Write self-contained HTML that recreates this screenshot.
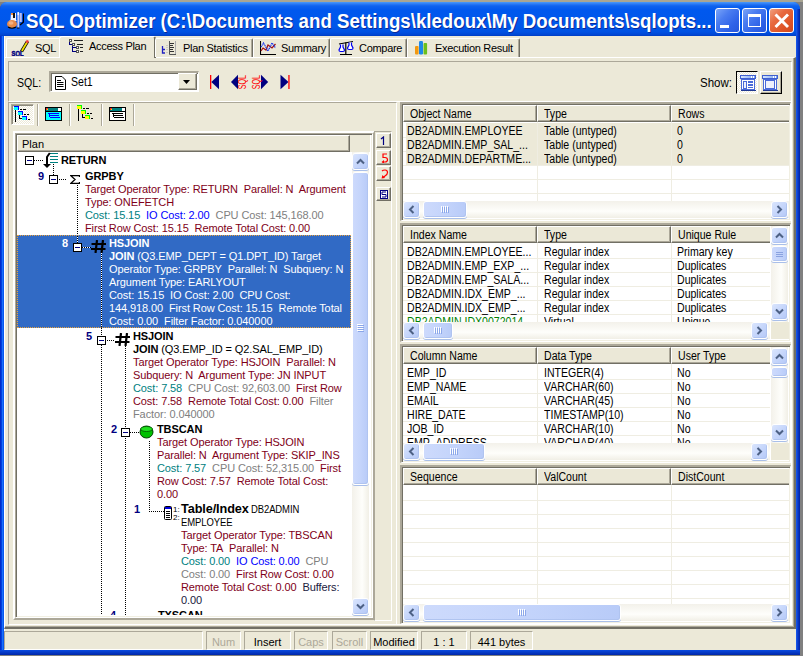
<!DOCTYPE html>
<html><head><meta charset="utf-8"><style>
*{box-sizing:border-box;margin:0;padding:0}
html,body{width:803px;height:656px;overflow:hidden;background:#808080;font-family:"Liberation Sans",sans-serif;font-size:11px;color:#000}
.a{position:absolute}
.t{white-space:nowrap;line-height:13px}
.ms{display:inline-block;font-size:12px;transform:scaleX(0.88);transform-origin:0 0}
.tr .t{letter-spacing:-0.1px}
.sbb{border:1px solid #fff;border-radius:3px;background:linear-gradient(135deg,#dae5fd,#c6d6fb 50%,#b4c8f7);box-shadow:inset -1px -1px 0 #b0c4f0, 0 1px 0 #a9bfe9}
.sbt{border:1px solid #fff;border-radius:3px;background:linear-gradient(90deg,#cddafc,#c4d4fb 50%,#b8cbf8);box-shadow:inset -1px -1px 0 #b0c4f0, 0 1px 0 #a9bfe9}
.trv{background:linear-gradient(90deg,#f3f1ea,#fefefb 60%,#f1efe6)}
.trh{background:linear-gradient(180deg,#f3f1ea,#fefefb 60%,#f1efe6)}
.hdr{background:#ebe8d7;border-top:1px solid #fff;border-left:1px solid #fff;border-right:1px solid #716f64;border-bottom:1px solid #716f64;box-shadow:inset -1px -1px 0 #aca899}
</style></head><body>
<div class="a" style="left:0;top:0;width:803px;height:2px;background:#a9a593"></div>
<div class="a" style="left:0;top:2px;width:800px;height:653px;background:linear-gradient(90deg,#0022c0 0px,#0040e0 1.5px,#1a70fa 2.5px,#0858f0 3.5px);border-radius:7px 7px 0 0"></div>
<div class="a" style="left:0;top:2px;width:800px;height:34px;border-radius:7px 7px 0 0;background:linear-gradient(180deg,#4a9af8 0px,#2a7af6 2px,#0e62ee 4px,#0058ee 8px,#0057ea 24px,#0051e2 30px,#0045d2 33px,#003cc0 34px)"></div>
<div class="a" style="left:796px;top:9px;width:4px;height:646px;background:linear-gradient(90deg,#1a5cf0,#0838c8 50%,#0022a0)"></div>
<div class="a" style="left:0;top:650px;width:800px;height:5px;background:linear-gradient(180deg,#0a4ae0,#0026a8)"></div>
<svg class="a" style="left:6px;top:12px" width="18" height="17">
<path d="M17.5 1.5 V10 L14 13" stroke="#000" stroke-width="1.3" fill="none"/>
<rect x="11.4" y="0.5" width="1.8" height="15.5" fill="#c8ccf4"/><rect x="13.6" y="1" width="2.2" height="9" fill="#b8bef0"/><rect x="11.6" y="0" width="1.2" height="3" fill="#fff"/>
<rect x="11" y="15.5" width="2.5" height="1" fill="#000"/>
<path d="M5 1 H10 V8 L11 9 H3 L4.5 8 Z" fill="#f4f4fc"/><rect x="5" y="1" width="2" height="2" fill="#f09040"/><rect x="7" y="1" width="2" height="5" fill="#111"/>
<ellipse cx="6" cy="12" rx="5" ry="4" fill="#e88a48"/><ellipse cx="5" cy="11" rx="2.5" ry="1.8" fill="#f4b080"/>
<path d="M2 15 Q6 17.5 10 15" stroke="#000" stroke-width="1.2" fill="none"/>
</svg>
<div class="a t" style="left:26px;top:10px;color:#fff;font-weight:bold;font-size:20px;line-height:22px;transform:scaleX(0.934);transform-origin:0 0;text-shadow:1px 1px 0 #0a2a9a">SQL Optimizer (C:\Documents and Settings\kledoux\My Documents\sqlopts...</div>
<div class="a" style="left:715px;top:8px;width:25px;height:25px;border:1px solid #fff;border-radius:3px;background:linear-gradient(135deg,#7aa4f8 0%,#4a7cf0 35%,#2f63e8 70%,#2557dc 100%)"><div class="a" style="left:4px;top:16px;width:9px;height:3px;background:#fff"></div></div>
<div class="a" style="left:742px;top:8px;width:25px;height:25px;border:1px solid #fff;border-radius:3px;background:linear-gradient(135deg,#7aa4f8 0%,#4a7cf0 35%,#2f63e8 70%,#2557dc 100%)"><div class="a" style="left:5px;top:5px;width:13px;height:13px;border:1px solid #fff;border-top:3px solid #fff"></div></div>
<div class="a" style="left:769px;top:8px;width:25px;height:25px;border:1px solid #fff;border-radius:3px;background:linear-gradient(135deg,#f0a080 0%,#e86a40 35%,#df5528 70%,#cf4820 100%)"><svg class="a" style="left:4px;top:4px" width="16" height="16"><path d="M1.5 1.5 L14 14 M14 1.5 L1.5 14" stroke="#fff" stroke-width="2.9"/></svg></div>
<div class="a" style="left:4px;top:36px;width:792px;height:614px;background:#ece9d8"></div>
<div class="a" style="left:4px;top:36px;width:1px;height:614px;background:#fff"></div>
<div class="a" style="left:4px;top:57px;width:792px;height:572px;border-top:1px solid #fff;border-left:1px solid #fff;border-right:2px solid #716f64;border-bottom:2px solid #716f64;box-shadow:inset -1px -1px 0 #aca899"></div>
<div class="a" style="left:6px;top:38px;width:54px;height:19px;border-top:1px solid #fff;border-left:1px solid #fff;border-radius:2px 2px 0 0"></div>
<div class="a" style="left:59px;top:36px;width:97px;height:22px;background:#ece9d8;border-top:1px solid #fff;border-left:1px solid #fff;border-right:2px solid #716f64;border-radius:3px 3px 0 0"></div>
<div class="a" style="left:155px;top:38px;width:98px;height:19px;border-top:1px solid #fff;border-left:1px solid #fff;border-right:1px solid #716f64;box-shadow:inset -1px 0 0 #aca899;border-radius:2px 2px 0 0"></div>
<div class="a" style="left:253px;top:38px;width:77px;height:19px;border-top:1px solid #fff;border-left:1px solid #fff;border-right:1px solid #716f64;box-shadow:inset -1px 0 0 #aca899;border-radius:2px 2px 0 0"></div>
<div class="a" style="left:330px;top:38px;width:77px;height:19px;border-top:1px solid #fff;border-left:1px solid #fff;border-right:1px solid #716f64;box-shadow:inset -1px 0 0 #aca899;border-radius:2px 2px 0 0"></div>
<div class="a" style="left:407px;top:38px;width:113px;height:19px;border-top:1px solid #fff;border-left:1px solid #fff;border-right:1px solid #716f64;box-shadow:inset -1px 0 0 #aca899;border-radius:2px 2px 0 0"></div>
<div class="a t" style="left:35px;top:42px;font-size:11px;letter-spacing:-0.3px">SQL</div>
<div class="a t" style="left:89px;top:40px;font-size:11px;letter-spacing:-0.3px">Access Plan</div>
<div class="a t" style="left:183px;top:42px;font-size:11px;letter-spacing:-0.3px">Plan Statistics</div>
<div class="a t" style="left:281px;top:42px;font-size:11px;letter-spacing:-0.3px">Summary</div>
<div class="a t" style="left:359px;top:42px;font-size:11px;letter-spacing:-0.3px">Compare</div>
<div class="a t" style="left:435px;top:42px;font-size:11px;letter-spacing:-0.3px">Execution Result</div>
<svg class="a" style="left:11px;top:39px" width="18" height="17" shape-rendering="crispEdges">
<path d="M10.5 12.5 L16.5 2.5" stroke="#000" stroke-width="3.4" shape-rendering="auto"/><path d="M10.8 12 L16.3 2.8" stroke="#f0e000" stroke-width="1.8" shape-rendering="auto"/>
<path d="M15.6 3.8 L17 1.5" stroke="#f04040" stroke-width="2.6" shape-rendering="auto"/>
<text x="0.5" y="16.5" font-size="7.5" font-weight="bold" font-family="Liberation Sans" fill="#000080" stroke="#000080" stroke-width="0.5" textLength="12" lengthAdjust="spacingAndGlyphs">SQL</text>
</svg>
<svg class="a" style="left:68px;top:38px" width="16" height="16" shape-rendering="crispEdges">
<rect x="1" y="1" width="3" height="3" fill="#555"/><rect x="2" y="2" width="1" height="1" fill="#fff"/>
<rect x="4" y="5" width="3" height="3" fill="#555"/><rect x="5" y="6" width="1" height="1" fill="#fff"/>
<rect x="8" y="8" width="3" height="3" fill="#555"/><rect x="9" y="9" width="1" height="1" fill="#fff"/>
<rect x="8" y="12" width="3" height="3" fill="#555"/><rect x="9" y="13" width="1" height="1" fill="#fff"/>
<rect x="1" y="4" width="1" height="3" fill="#000080"/><rect x="1" y="6" width="3" height="1" fill="#000080"/>
<rect x="4" y="8" width="1" height="6" fill="#000080"/><rect x="4" y="9" width="4" height="1" fill="#000080"/><rect x="4" y="13" width="4" height="1" fill="#000080"/>
<rect x="6" y="2" width="9" height="1" fill="#222"/><rect x="9" y="6" width="6" height="1" fill="#222"/><rect x="12" y="9" width="3" height="1" fill="#222"/><rect x="12" y="13" width="3" height="1" fill="#222"/>
</svg>
<svg class="a" style="left:161px;top:40px" width="16" height="15">
<path d="M1.5 6 V13 H4 M1.5 9.5 H4" stroke="#2020c0" stroke-width="1.3" fill="none"/>
<path d="M6 5 V11 M6 12 V14" stroke="#aaa" stroke-dasharray="1 1"/>
<path d="M8.5 1 V14.5 H15" stroke="#555" fill="none"/><path d="M9 3.5 H13 M9 5.5 H12 M9 7.5 H13 M9 9.5 H12 M9 11.5 H13" stroke="#333"/>
<path d="M14.5 1 V14" stroke="#aaa"/>
</svg>
<svg class="a" style="left:260px;top:41px" width="17" height="15">
<path d="M0.5 0 V13.5 H16" stroke="#000" stroke-width="1.1" fill="none"/>
<path d="M1 10 L3 7 L6 9 L8 4 L12 7 L15.5 3" stroke="#a01010" stroke-width="1.2" fill="none"/>
<path d="M1 6 L3.5 2 L8 10 L12 2 L15.5 7" stroke="#1030f0" stroke-width="1.2" fill="none" stroke-dasharray="1.2 0.6"/>
</svg>
<svg class="a" style="left:337px;top:40px" width="18" height="16">
<path d="M2 4 L16 1.5" stroke="#000" stroke-width="1.1"/><path d="M8.8 2.5 V14.5 M3 14.5 H15" stroke="#000" stroke-width="1.2"/>
<path d="M3.5 4.5 V7 L2 10 Q2 11.5 3.5 11.5 H6 Q7.5 11.5 7.5 10 L6 7 V4.5" stroke="#0000f0" stroke-width="1.2" fill="#fff"/>
<path d="M12 2.5 V5 L10.5 8 Q10.5 9.5 12 9.5 H14.5 Q16 9.5 16 8 L14.5 5 V2.5" stroke="#0000f0" stroke-width="1.2" fill="#fff"/>
</svg>
<svg class="a" style="left:414px;top:40px" width="14" height="15">
<rect x="1" y="6" width="3.6" height="8.5" rx="1" fill="#f29a10"/><rect x="5" y="1" width="4" height="13.5" rx="1.2" fill="#1e88e8"/><rect x="9.5" y="3" width="3.6" height="11.5" rx="1" fill="#6cc01c"/>
</svg>
<div class="a" style="left:8px;top:61px;width:784px;height:41px;border-top:1px solid #aca899;border-left:1px solid #aca899;border-bottom:1px solid #fff;border-right:1px solid #fff"></div>
<div class="a t" style="left:17px;top:76px;line-height:14px"><span class="ms">SQL:</span></div>
<div class="a" style="left:49px;top:71px;width:150px;height:21px;background:#fff;border-top:2px solid #aca899;border-left:2px solid #aca899;border-bottom:1px solid #fff;border-right:1px solid #fff;box-shadow:inset 1px 1px 0 #716f64"></div>
<div class="a t" style="left:71px;top:75px;line-height:14px"><span class="ms">Set1</span></div>
<div class="a" style="left:178px;top:73px;width:19px;height:17px;background:#ece9d8;border-top:1px solid #fff;border-left:1px solid #fff;border-right:1px solid #716f64;border-bottom:1px solid #716f64;box-shadow:inset -1px -1px 0 #aca899"></div>
<svg class="a" style="left:183px;top:80px" width="8" height="5"><path d="M0 0 H7 L3.5 4 Z" fill="#000"/></svg>
<svg class="a" style="left:55px;top:76px" width="11" height="14"><path d="M0.5 0.5 H7 L10.5 4 V13.5 H0.5 Z" fill="#fff" stroke="#000"/><path d="M2 4.5 H6 M2 6.5 H8.5 M2 8.5 H8.5 M2 10.5 H8.5" stroke="#000"/></svg>
<svg class="a" style="left:209px;top:74px" width="82" height="17">
<rect x="1" y="1" width="1.3" height="14" fill="#f00"/><path d="M2.3 8 L10 0.8 V15.2 Z" fill="#000080"/>
<path d="M22 8 L29 0.8 V15.2 Z" fill="#000080"/>
<text transform="translate(37.3,15.2) rotate(-90)" font-size="10.5" font-family="Liberation Sans" fill="#f00" textLength="14.2" lengthAdjust="spacingAndGlyphs">SQL</text>
<path d="M59.2 8 L52 0.8 V15.2 Z" fill="#000080"/>
<text transform="translate(51.3,15.2) rotate(-90)" font-size="10.5" font-family="Liberation Sans" fill="#f00" textLength="14.2" lengthAdjust="spacingAndGlyphs">SQL</text>
<path d="M79.5 8 L71.5 0.8 V15.2 Z" fill="#000080"/><rect x="79.3" y="1" width="1.3" height="14" fill="#f00"/>
</svg>
<div class="a t" style="left:700px;top:76px;line-height:14px"><span class="ms" style="transform:scaleX(0.96)">Show:</span></div>
<div class="a" style="left:736px;top:71px;width:22px;height:23px;background:repeating-conic-gradient(#fff 0 25%,#ece9d8 0 50%) 0 0/2px 2px;border-top:1px solid #000;border-left:1px solid #000;border-right:1px solid #fff;border-bottom:1px solid #fff"></div>
<div class="a" style="left:760px;top:71px;width:22px;height:23px;background:#ece9d8;border-top:1px solid #fff;border-left:1px solid #fff;border-right:1px solid #000;border-bottom:1px solid #000;box-shadow:inset -1px -1px 0 #aca899"></div>
<svg class="a" style="left:739px;top:74px" width="18" height="18" shape-rendering="crispEdges"><defs><linearGradient id="tg" x1="0" x2="1"><stop offset="0" stop-color="#d8e8ff"/><stop offset="1" stop-color="#7aa0ee"/></linearGradient></defs><rect x="1.5" y="1.5" width="15" height="3" fill="url(#tg)" stroke="#4060d0"/><rect x="12" y="2" width="1" height="2" fill="#fff"/><rect x="14" y="2" width="1" height="2" fill="#fff"/><rect x="2.5" y="5.5" width="13" height="10" fill="#fff" stroke="#4a6ad8"/><rect x="4.5" y="7.5" width="3" height="7" fill="#eef0fc" stroke="#4a6ad8"/><rect x="9" y="7" width="5" height="2" fill="#4a6ad8"/><rect x="9" y="10" width="5" height="2" fill="#4a6ad8"/><rect x="9" y="13" width="5" height="1" fill="#4a6ad8"/><rect x="2" y="16" width="15" height="1" fill="#203890"/></svg>
<svg class="a" style="left:762px;top:74px" width="18" height="18" shape-rendering="crispEdges"><defs><linearGradient id="tg2" x1="0" x2="1"><stop offset="0" stop-color="#d8e8ff"/><stop offset="1" stop-color="#7aa0ee"/></linearGradient></defs><rect x="0.5" y="1.5" width="15" height="3" fill="url(#tg2)" stroke="#4060d0"/><rect x="11" y="2" width="1" height="2" fill="#fff"/><rect x="13" y="2" width="1" height="2" fill="#fff"/><rect x="1.5" y="5.5" width="13" height="10" fill="#fff" stroke="#4a6ad8"/><rect x="3.5" y="6.5" width="9" height="8" fill="#eef0fc" stroke="#4a6ad8"/><rect x="1" y="16" width="15" height="1" fill="#203890"/></svg>
<div class="a" style="left:8px;top:102px;width:784px;height:523px;border-left:1px solid #aca899;border-bottom:1px solid #fff;border-right:1px solid #fff"></div>
<div class="a" style="left:9px;top:102px;width:388px;height:522px;border-top:1px solid #aca899;border-right:1px solid #fff"></div>
<div class="a" style="left:11px;top:104px;width:23px;height:21px;background:repeating-conic-gradient(#fff 0 25%,#ece9d8 0 50%) 0 0/2px 2px;border-top:1px solid #aca899;border-left:1px solid #aca899;border-bottom:1px solid #fff;border-right:1px solid #fff;box-shadow:inset 1px 1px 0 #8e8b7c"></div>
<div class="a" style="left:37px;top:104px;width:2px;height:22px;border-left:1px solid #aca899;border-right:1px solid #fff"></div>
<div class="a" style="left:69px;top:104px;width:2px;height:22px;border-left:1px solid #aca899;border-right:1px solid #fff"></div>
<div class="a" style="left:101px;top:104px;width:2px;height:22px;border-left:1px solid #aca899;border-right:1px solid #fff"></div>
<div class="a" style="left:133px;top:104px;width:2px;height:22px;border-left:1px solid #aca899;border-right:1px solid #fff"></div>
<svg class="a" style="left:13px;top:105px" width="18" height="18" shape-rendering="crispEdges">
<rect x="1" y="1" width="5" height="1" fill="#0000ff"/><rect x="1" y="2" width="4" height="3" fill="#00ffff"/><rect x="5" y="1" width="1" height="4" fill="#0000ff"/>
<rect x="5" y="6" width="5" height="1" fill="#0000ff"/><rect x="5" y="7" width="4" height="3" fill="#00ffff"/><rect x="9" y="6" width="1" height="4" fill="#0000ff"/>
<rect x="9" y="11" width="5" height="1" fill="#0000ff"/><rect x="9" y="12" width="4" height="3" fill="#00ffff"/><rect x="13" y="11" width="1" height="4" fill="#0000ff"/>
<rect x="2" y="5" width="1" height="12" fill="#000"/><rect x="6" y="10" width="1" height="4" fill="#000"/><rect x="6" y="13" width="3" height="1" fill="#000"/>
<rect x="7" y="4" width="2" height="1" fill="#000"/><rect x="10" y="4" width="3" height="1" fill="#000"/>
<rect x="11" y="9" width="2" height="1" fill="#000"/><rect x="14" y="9" width="2" height="1" fill="#000"/><rect x="15" y="14" width="2" height="1" fill="#000"/>
</svg>
<svg class="a" style="left:45px;top:107px" width="17" height="14" shape-rendering="crispEdges">
<rect x="0" y="0" width="17" height="14" fill="#000"/><rect x="1" y="1" width="15" height="3" fill="#008080"/><rect x="1" y="1" width="2" height="2" fill="#f03030"/><rect x="2" y="2" width="1" height="1" fill="#f0f000"/><rect x="13" y="1" width="3" height="3" fill="#fff"/>
<rect x="1" y="4" width="15" height="1" fill="#000"/><rect x="1" y="5" width="15" height="8" fill="#00ffff"/>
<rect x="3" y="6" width="11" height="1" fill="#0000ff"/><rect x="5" y="8" width="9" height="1" fill="#0000ff"/><rect x="5" y="10" width="10" height="1" fill="#0000ff"/><rect x="4" y="7" width="1" height="3" fill="#0000ff"/>
</svg>
<svg class="a" style="left:76px;top:104px" width="18" height="18" shape-rendering="crispEdges">
<rect x="1" y="1" width="5" height="1" fill="#00ff00"/><rect x="1" y="2" width="4" height="3" fill="#ffff00"/><rect x="5" y="1" width="1" height="4" fill="#00ff00"/>
<rect x="5" y="6" width="5" height="1" fill="#00ff00"/><rect x="5" y="7" width="4" height="3" fill="#ffff00"/><rect x="9" y="6" width="1" height="4" fill="#00ff00"/>
<rect x="9" y="11" width="5" height="1" fill="#00ff00"/><rect x="9" y="12" width="4" height="3" fill="#ffff00"/><rect x="13" y="11" width="1" height="4" fill="#00ff00"/>
<rect x="2" y="5" width="1" height="12" fill="#000"/><rect x="6" y="10" width="1" height="4" fill="#000"/><rect x="6" y="13" width="3" height="1" fill="#000"/>
<rect x="7" y="4" width="2" height="1" fill="#000"/><rect x="10" y="4" width="3" height="1" fill="#000"/>
<rect x="11" y="9" width="2" height="1" fill="#000"/><rect x="14" y="9" width="2" height="1" fill="#000"/><rect x="15" y="14" width="2" height="1" fill="#000"/>
</svg>
<svg class="a" style="left:109px;top:107px" width="17" height="14" shape-rendering="crispEdges">
<rect x="0" y="0" width="17" height="14" fill="#000"/><rect x="1" y="1" width="15" height="3" fill="#008080"/><rect x="1" y="1" width="2" height="2" fill="#f03030"/><rect x="2" y="2" width="1" height="1" fill="#f0f000"/><rect x="13" y="1" width="3" height="3" fill="#fff"/>
<rect x="1" y="4" width="15" height="1" fill="#000"/><rect x="1" y="5" width="15" height="8" fill="#fff"/>
<rect x="3" y="6" width="11" height="1" fill="#000"/><rect x="5" y="8" width="9" height="1" fill="#000"/><rect x="5" y="10" width="10" height="1" fill="#000"/><rect x="4" y="7" width="1" height="3" fill="#000"/>
</svg>
<div class="a" style="left:13px;top:131px;width:362px;height:489px;border-top:2px solid #fff;border-left:2px solid #fff;border-right:2px solid #aca899;border-bottom:2px solid #aca899"></div>
<div class="a" style="left:15px;top:133px;width:358px;height:485px;background:#fff;border-top:1px solid #aca899;border-left:1px solid #aca899;border-right:1px solid #fff;border-bottom:1px solid #fff;box-shadow:inset 1px 1px 0 #716f64, inset -1px -1px 0 #f1efe2"></div>
<div class="a hdr" style="left:17px;top:135px;width:333px;height:17px;"></div>
<div class="a" style="left:350px;top:135px;width:20px;height:17px;background:#ebe8d7"></div>
<div class="a t" style="left:22px;top:138px;font-size:11px">Plan</div>
<div class="a tr" style="left:17px;top:152px;width:335px;height:463px;overflow:hidden">
<div class="a" style="left:0px;top:83px;width:334px;height:93px;background:#316ac5;border:1px dotted #e9a23c"></div>
<div class="a" style="left:8px;top:4px;width:9px;height:9px;background:#fff;border:1px solid #000"><div class="a" style="left:1px;top:3px;width:5px;height:1px;background:#000080"></div></div>
<div class="a" style="left:17px;top:8px;width:9px;height:1px;background:repeating-linear-gradient(90deg,#000 0 1px,transparent 1px 2px)"></div>
<div class="a" style="left:36px;top:12px;width:1px;height:11px;background:repeating-linear-gradient(180deg,#000 0 1px,transparent 1px 2px)"></div>
<div class="a" style="left:32px;top:23px;width:9px;height:9px;background:#fff;border:1px solid #000"><div class="a" style="left:1px;top:3px;width:5px;height:1px;background:#000080"></div></div>
<div class="a" style="left:42px;top:27px;width:8px;height:1px;background:repeating-linear-gradient(90deg,#000 0 1px,transparent 1px 2px)"></div>
<div class="a" style="left:60px;top:33px;width:1px;height:50px;background:repeating-linear-gradient(180deg,#000 0 1px,transparent 1px 2px)"></div>
<div class="a" style="left:60px;top:84px;width:1px;height:7px;background:repeating-linear-gradient(180deg,#000 0 1px,#fff 1px 2px)"></div>
<div class="a" style="left:56px;top:91px;width:9px;height:9px;background:#fff;border:1px solid #000"><div class="a" style="left:1px;top:3px;width:5px;height:1px;background:#000080"></div></div>
<div class="a" style="left:65px;top:95px;width:9px;height:1px;background:repeating-linear-gradient(90deg,#000 0 1px,#fff 1px 2px)"></div>
<div class="a" style="left:84px;top:100px;width:1px;height:75px;background:repeating-linear-gradient(180deg,#000 0 1px,#fff 1px 2px)"></div>
<div class="a" style="left:84px;top:176px;width:1px;height:8px;background:repeating-linear-gradient(180deg,#000 0 1px,transparent 1px 2px)"></div>
<div class="a" style="left:84px;top:193px;width:1px;height:270px;background:repeating-linear-gradient(180deg,#000 0 1px,transparent 1px 2px)"></div>
<div class="a" style="left:80px;top:184px;width:9px;height:9px;background:#fff;border:1px solid #000"><div class="a" style="left:1px;top:3px;width:5px;height:1px;background:#000080"></div></div>
<div class="a" style="left:90px;top:188px;width:8px;height:1px;background:repeating-linear-gradient(90deg,#000 0 1px,transparent 1px 2px)"></div>
<div class="a" style="left:108px;top:194px;width:1px;height:269px;background:repeating-linear-gradient(180deg,#000 0 1px,transparent 1px 2px)"></div>
<div class="a" style="left:104px;top:276px;width:9px;height:9px;background:#fff;border:1px solid #000"><div class="a" style="left:1px;top:3px;width:5px;height:1px;background:#000080"></div></div>
<div class="a" style="left:113px;top:280px;width:9px;height:1px;background:repeating-linear-gradient(90deg,#000 0 1px,transparent 1px 2px)"></div>
<div class="a" style="left:132px;top:289px;width:1px;height:70px;background:repeating-linear-gradient(180deg,#000 0 1px,transparent 1px 2px)"></div>
<div class="a" style="left:132px;top:359px;width:15px;height:1px;background:repeating-linear-gradient(90deg,#000 0 1px,transparent 1px 2px)"></div>
<div class="a" style="left:26px;top:0px;width:16px;height:17px;"><svg width="16" height="17"><path d="M7 1.5 H15 M7 4.5 H15 M7 7.5 H15 M7 10.5 H15" stroke="#008080" stroke-width="1.2"/><path d="M6.8 1 L4 5 V12.5" stroke="#000" stroke-width="2" fill="none"/><path d="M0 12 H8 L4 16 Z" fill="#000"/></svg></div>
<div class="a" style="left:53px;top:22px;width:10px;height:9px;"><svg width="10" height="9"><path d="M9.5 2 V0.7 H0.8 L5 4.5 L0.8 8.3 H9.5 V7" stroke="#000" fill="none" stroke-width="1.3"/></svg></div>
<div class="a" style="left:74px;top:88px;width:16px;height:13px;"><svg width="16" height="13"><path d="M6 0 L4.5 13 M12 0 L10.5 13 M0.5 4 H15 M0 9 H14.5" stroke="#000" stroke-width="2.2"/></svg></div>
<div class="a" style="left:98px;top:181px;width:16px;height:13px;"><svg width="16" height="13"><path d="M6 0 L4.5 13 M12 0 L10.5 13 M0.5 4 H15 M0 9 H14.5" stroke="#000" stroke-width="2.2"/></svg></div>
<div class="a" style="left:122px;top:272px;width:15px;height:15px;"><svg width="15" height="15"><ellipse cx="7.5" cy="8" rx="6.5" ry="6" fill="#00c000" stroke="#004000"/><ellipse cx="7.5" cy="5" rx="6" ry="2.5" fill="#20e020" stroke="#005000" stroke-width="0.8"/></svg></div>
<div class="a" style="left:146px;top:353px;width:18px;height:17px;"><svg width="18" height="17"><rect x="1.5" y="1.5" width="7" height="13" rx="1" fill="#fff" stroke="#000"/><rect x="2" y="2" width="6" height="2" fill="#0000e0"/><path d="M3 6.5 H7 M3 8.5 H7 M3 10.5 H7 M3 12.5 H7" stroke="#000"/><text x="10" y="7" font-size="8" font-family="Liberation Sans">1:</text><text x="10" y="15" font-size="8" font-family="Liberation Sans">2:</text></svg></div>
<div class="a" style="left:123px;top:459px;width:17px;height:6px;"><svg width="17" height="6"><rect x="1" y="2" width="8" height="4" fill="#0000c0"/><rect x="2" y="1" width="6" height="1" fill="#000"/><path d="M10 2 L12 5 M14 2 L12 5" stroke="#e0e000" stroke-width="1.2"/></svg></div>
<div class="a t" style="left:44px;top:2px;font-weight:bold">RETURN</div>
<div class="a t" style="left:21px;top:18px;font-weight:bold;color:#000080">9</div>
<div class="a t" style="left:68px;top:18px;font-weight:bold">GRPBY</div>
<div class="a t" style="left:68px;top:31px;"><span style="color:#800018">Target Operator Type: RETURN&nbsp; Parallel: N&nbsp; Argument</span></div>
<div class="a t" style="left:68px;top:44px;"><span style="color:#800018">Type: ONEFETCH</span></div>
<div class="a t" style="left:68px;top:57px;"><span style="color:#008080">Cost: 15.15</span>&nbsp; <span style="color:#0000ff">IO Cost: 2.00</span>&nbsp; <span style="color:#808080">CPU Cost: 145,168.00</span></div>
<div class="a t" style="left:68px;top:70px;"><span style="color:#800018">First Row Cost: 15.15&nbsp; Remote Total Cost: 0.00</span></div>
<div class="a t" style="left:45px;top:85px;font-weight:bold;color:#fff">8</div>
<div class="a t" style="left:92px;top:85px;font-weight:bold;color:#fff">HSJOIN</div>
<div class="a t" style="left:92px;top:98px;"><span style="color:#fff"><b>JOIN</b> (Q3.EMP_DEPT = Q1.DPT_ID) Target</span></div>
<div class="a t" style="left:92px;top:111px;"><span style="color:#fff">Operator Type: GRPBY&nbsp; Parallel: N&nbsp; Subquery: N</span></div>
<div class="a t" style="left:92px;top:124px;"><span style="color:#fff">Argument Type: EARLYOUT</span></div>
<div class="a t" style="left:92px;top:137px;"><span style="color:#fff">Cost: 15.15&nbsp; IO Cost: 2.00&nbsp; CPU Cost:</span></div>
<div class="a t" style="left:92px;top:150px;"><span style="color:#fff">144,918.00&nbsp; First Row Cost: 15.15&nbsp; Remote Total</span></div>
<div class="a t" style="left:92px;top:163px;"><span style="color:#fff">Cost: 0.00&nbsp; Filter Factor: 0.040000</span></div>
<div class="a t" style="left:69px;top:178px;font-weight:bold;color:#000080">5</div>
<div class="a t" style="left:116px;top:178px;font-weight:bold">HSJOIN</div>
<div class="a t" style="left:116px;top:191px;"><b>JOIN</b> (Q3.EMP_ID = Q2.SAL_EMP_ID)</div>
<div class="a t" style="left:116px;top:204px;"><span style="color:#800018">Target Operator Type: HSJOIN&nbsp; Parallel: N</span></div>
<div class="a t" style="left:116px;top:217px;"><span style="color:#800018">Subquery: N&nbsp; Argument Type: JN INPUT</span></div>
<div class="a t" style="left:116px;top:230px;"><span style="color:#008080">Cost: 7.58</span>&nbsp; <span style="color:#808080">CPU Cost: 92,603.00</span>&nbsp; <span style="color:#800018">First Row</span></div>
<div class="a t" style="left:116px;top:243px;"><span style="color:#800018">Cost: 7.58&nbsp; Remote Total Cost: 0.00</span>&nbsp; <span style="color:#808080">Filter</span></div>
<div class="a t" style="left:116px;top:256px;"><span style="color:#808080">Factor: 0.040000</span></div>
<div class="a t" style="left:94px;top:271px;font-weight:bold;color:#000080">2</div>
<div class="a t" style="left:140px;top:271px;font-weight:bold">TBSCAN</div>
<div class="a t" style="left:140px;top:284px;"><span style="color:#800018">Target Operator Type: HSJOIN</span></div>
<div class="a t" style="left:140px;top:297px;"><span style="color:#800018">Parallel: N&nbsp; Argument Type: SKIP_INS</span></div>
<div class="a t" style="left:140px;top:310px;"><span style="color:#008080">Cost: 7.57</span>&nbsp; <span style="color:#808080">CPU Cost: 52,315.00</span>&nbsp; <span style="color:#800018">First</span></div>
<div class="a t" style="left:140px;top:323px;"><span style="color:#800018">Row Cost: 7.57&nbsp; Remote Total Cost:</span></div>
<div class="a t" style="left:140px;top:336px;"><span style="color:#800018">0.00</span></div>
<div class="a t" style="left:117px;top:351px;font-weight:bold;color:#000080">1</div>
<div class="a t" style="left:164px;top:351px;"><b style="font-size:12.7px">Table/Index</b></div>
<div class="a t" style="left:234px;top:351px;"><span style="display:inline-block;transform:scaleX(0.86);transform-origin:0 0">DB2ADMIN</span></div>
<div class="a t" style="left:164px;top:364px;"><span style="display:inline-block;transform:scaleX(0.86);transform-origin:0 0">EMPLOYEE</span></div>
<div class="a t" style="left:164px;top:377px;"><span style="color:#800018">Target Operator Type: TBSCAN</span></div>
<div class="a t" style="left:164px;top:390px;"><span style="color:#800018">Type: TA&nbsp; Parallel: N</span></div>
<div class="a t" style="left:164px;top:403px;"><span style="color:#008080">Cost: 0.00</span>&nbsp; <span style="color:#0000ff">IO Cost: 0.00</span>&nbsp; <span style="color:#808080">CPU</span></div>
<div class="a t" style="left:164px;top:416px;"><span style="color:#808080">Cost: 0.00</span>&nbsp; <span style="color:#800018">First Row Cost: 0.00</span></div>
<div class="a t" style="left:164px;top:429px;"><span style="color:#800018">Remote Total Cost: 0.00</span>&nbsp; <span style="color:#202040">Buffers:</span></div>
<div class="a t" style="left:164px;top:442px;"><span style="color:#202040">0.00</span></div>
<div class="a t" style="left:93px;top:457px;font-weight:bold;color:#000080">4</div>
<div class="a t" style="left:141px;top:457px;font-weight:bold">TXSCAN</div>
</div>
<div class="a trv" style="left:352px;top:152px;width:17px;height:463px;"></div>
<div class="a sbb" style="left:352px;top:153px;width:17px;height:17px;"><svg class="a" style="left:3px;top:4px" width="9" height="7"><path d="M1 5.5 L4.5 2 L8 5.5" stroke="#4d6185" stroke-width="2" fill="none"/></svg></div>
<div class="a sbt" style="left:352px;top:172px;width:17px;height:313px;"><svg class="a" style="left:4px;top:151px" width="8" height="9"><path d="M0 0.5 H6 M0 2.5 H6 M0 4.5 H6 M0 6.5 H6" stroke="#fff"/><path d="M1 1.5 H7 M1 3.5 H7 M1 5.5 H7 M1 7.5 H7" stroke="#8aa6e8"/></svg></div>
<div class="a sbb" style="left:352px;top:598px;width:17px;height:17px;"><svg class="a" style="left:3px;top:4px" width="9" height="7"><path d="M1 1.5 L4.5 5 L8 1.5" stroke="#4d6185" stroke-width="2" fill="none"/></svg></div>
<div class="a" style="left:374px;top:131px;width:18px;height:490px;border-top:1px solid #aca899;border-left:1px solid #aca899;border-right:1px solid #fff;border-bottom:1px solid #fff"></div>
<div class="a" style="left:376px;top:133px;width:15px;height:15px;background:#ece9d8;border-top:1px solid #fff;border-left:1px solid #fff;border-right:1px solid #716f64;border-bottom:1px solid #716f64;box-shadow:inset -1px -1px 0 #aca899"><svg class="a" style="left:1px;top:2px" width="9" height="10"><path d="M3 3 L5.5 1 V9" stroke="#000080" stroke-width="1.2" fill="none"/></svg></div>
<div class="a" style="left:376px;top:150px;width:15px;height:15px;background:#ece9d8;border-top:1px solid #fff;border-left:1px solid #fff;border-right:1px solid #716f64;border-bottom:1px solid #716f64;box-shadow:inset -1px -1px 0 #aca899"><svg class="a" style="left:3px;top:2px" width="9" height="10"><path d="M7 1 H3 V4.5 H5 Q7.5 4.5 7.5 6.8 Q7.5 9 5 9 H3" stroke="#f00" stroke-width="1.2" fill="none"/><path d="M1.5 9 L4 7 V11 Z" fill="#f00"/></svg></div>
<div class="a" style="left:376px;top:166px;width:15px;height:15px;background:#ece9d8;border-top:1px solid #fff;border-left:1px solid #fff;border-right:1px solid #716f64;border-bottom:1px solid #716f64;box-shadow:inset -1px -1px 0 #aca899"><svg class="a" style="left:3px;top:2px" width="9" height="10"><path d="M2 2 Q3 1 5 1 Q7.5 1 7.5 3.5 Q7.5 5.5 5 7 L3 8.5" stroke="#f00" stroke-width="1.2" fill="none"/><path d="M1.5 9.5 L2.5 6 L5 9 Z" fill="#f00"/></svg></div>
<div class="a" style="left:376px;top:187px;width:15px;height:14px;background:#ece9d8;border-top:1px solid #fff;border-left:1px solid #fff;border-right:1px solid #716f64;border-bottom:1px solid #716f64;box-shadow:inset -1px -1px 0 #aca899"><svg class="a" style="left:3px;top:2px" width="8" height="9"><rect x="0.5" y="0.5" width="7" height="8" fill="#fff" stroke="#000080"/><path d="M6 2 H2 V4.5 H6 V7 H2" stroke="#000080" fill="none"/></svg></div>
<div class="a" style="left:400px;top:102px;width:391px;height:119px;background:#fff;border-top:2px solid #aca899;border-left:2px solid #aca899;border-right:1px solid #fff;border-bottom:1px solid #fff;box-shadow:inset 1px 1px 0 #716f64, inset -1px -1px 0 #f1efe2"></div>
<div class="a" style="left:403px;top:122px;width:386px;height:79px;overflow:hidden">
<div class="a" style="left:0px;top:0px;width:386px;height:1px;background:#fff"></div>
<div class="a" style="left:3px;top:1px;width:383px;height:14px;background:#ece9d8"></div>
<div class="a" style="left:0px;top:15px;width:386px;height:1px;background:#efede2"></div>
<div class="a" style="left:3px;top:15px;width:383px;height:14px;background:#ece9d8"></div>
<div class="a" style="left:0px;top:29px;width:386px;height:1px;background:#efede2"></div>
<div class="a" style="left:3px;top:29px;width:383px;height:14px;background:#ece9d8"></div>
<div class="a" style="left:0px;top:43px;width:386px;height:1px;background:#efede2"></div>
<div class="a" style="left:0px;top:57px;width:386px;height:1px;background:#efede2"></div>
<div class="a" style="left:0px;top:71px;width:386px;height:1px;background:#efede2"></div>
<div class="a" style="left:0px;top:85px;width:386px;height:1px;background:#efede2"></div>
<div class="a" style="left:134px;top:0px;width:1px;height:79px;background:#efede2"></div>
<div class="a" style="left:268px;top:0px;width:1px;height:79px;background:#efede2"></div>
<div class="a" style="left:4px;top:2px;width:130px;height:14px;line-height:14px;white-space:nowrap;color:#000"><span class="ms">DB2ADMIN.EMPLOYEE</span></div>
<div class="a" style="left:141px;top:2px;width:130px;height:14px;line-height:14px;white-space:nowrap;color:#000"><span class="ms">Table (untyped)</span></div>
<div class="a" style="left:274px;top:2px;width:130px;height:14px;line-height:14px;white-space:nowrap;color:#000"><span class="ms">0</span></div>
<div class="a" style="left:4px;top:16px;width:130px;height:14px;line-height:14px;white-space:nowrap;color:#000"><span class="ms">DB2ADMIN.EMP_SAL_...</span></div>
<div class="a" style="left:141px;top:16px;width:130px;height:14px;line-height:14px;white-space:nowrap;color:#000"><span class="ms">Table (untyped)</span></div>
<div class="a" style="left:274px;top:16px;width:130px;height:14px;line-height:14px;white-space:nowrap;color:#000"><span class="ms">0</span></div>
<div class="a" style="left:4px;top:30px;width:130px;height:14px;line-height:14px;white-space:nowrap;color:#000"><span class="ms">DB2ADMIN.DEPARTME...</span></div>
<div class="a" style="left:141px;top:30px;width:130px;height:14px;line-height:14px;white-space:nowrap;color:#000"><span class="ms">Table (untyped)</span></div>
<div class="a" style="left:274px;top:30px;width:130px;height:14px;line-height:14px;white-space:nowrap;color:#000"><span class="ms">0</span></div>
</div>
<div class="a hdr" style="left:403px;top:105px;width:134px;height:17px;"></div>
<div class="a hdr" style="left:537px;top:105px;width:134px;height:17px;"></div>
<div class="a hdr" style="left:671px;top:105px;width:118px;height:17px;border-right:none;box-shadow:inset 0 -1px 0 #aca899"></div>
<div class="a t" style="left:410px;top:107px;line-height:14px"><span class="ms">Object Name</span></div>
<div class="a t" style="left:544px;top:107px;line-height:14px"><span class="ms">Type</span></div>
<div class="a t" style="left:678px;top:107px;line-height:14px"><span class="ms">Rows</span></div>
<div class="a trh" style="left:403px;top:201px;width:386px;height:17px;"></div>
<div class="a sbb" style="left:403px;top:201px;width:17px;height:17px;"><svg class="a" style="left:4px;top:3px" width="7" height="9"><path d="M5.5 1 L2 4.5 L5.5 8" stroke="#4d6185" stroke-width="2" fill="none"/></svg></div>
<div class="a sbb" style="left:771px;top:201px;width:17px;height:17px;"><svg class="a" style="left:4px;top:3px" width="7" height="9"><path d="M1.5 1 L5 4.5 L1.5 8" stroke="#4d6185" stroke-width="2" fill="none"/></svg></div>
<div class="a sbt" style="left:423px;top:201px;width:44px;height:17px;"><svg class="a" style="left:17px;top:4px" width="9" height="8"><path d="M0.5 0 V6 M2.5 0 V6 M4.5 0 V6 M6.5 0 V6" stroke="#fff"/><path d="M1.5 1 V7 M3.5 1 V7 M5.5 1 V7 M7.5 1 V7" stroke="#8ca8ea"/></svg></div>
<div class="a" style="left:400px;top:223px;width:391px;height:119px;background:#fff;border-top:2px solid #aca899;border-left:2px solid #aca899;border-right:1px solid #fff;border-bottom:1px solid #fff;box-shadow:inset 1px 1px 0 #716f64, inset -1px -1px 0 #f1efe2"></div>
<div class="a" style="left:403px;top:243px;width:367px;height:79px;overflow:hidden">
<div class="a" style="left:0px;top:0px;width:367px;height:1px;background:#fff"></div>
<div class="a" style="left:0px;top:15px;width:367px;height:1px;background:#efede2"></div>
<div class="a" style="left:0px;top:29px;width:367px;height:1px;background:#efede2"></div>
<div class="a" style="left:0px;top:43px;width:367px;height:1px;background:#efede2"></div>
<div class="a" style="left:0px;top:57px;width:367px;height:1px;background:#efede2"></div>
<div class="a" style="left:0px;top:71px;width:367px;height:1px;background:#efede2"></div>
<div class="a" style="left:0px;top:85px;width:367px;height:1px;background:#efede2"></div>
<div class="a" style="left:134px;top:0px;width:1px;height:79px;background:#efede2"></div>
<div class="a" style="left:268px;top:0px;width:1px;height:79px;background:#efede2"></div>
<div class="a" style="left:4px;top:2px;width:130px;height:14px;line-height:14px;white-space:nowrap;color:#000"><span class="ms">DB2ADMIN.EMPLOYEE...</span></div>
<div class="a" style="left:141px;top:2px;width:130px;height:14px;line-height:14px;white-space:nowrap;color:#000"><span class="ms">Regular index</span></div>
<div class="a" style="left:274px;top:2px;width:130px;height:14px;line-height:14px;white-space:nowrap;color:#000"><span class="ms">Primary key</span></div>
<div class="a" style="left:4px;top:16px;width:130px;height:14px;line-height:14px;white-space:nowrap;color:#000"><span class="ms">DB2ADMIN.EMP_EXP_...</span></div>
<div class="a" style="left:141px;top:16px;width:130px;height:14px;line-height:14px;white-space:nowrap;color:#000"><span class="ms">Regular index</span></div>
<div class="a" style="left:274px;top:16px;width:130px;height:14px;line-height:14px;white-space:nowrap;color:#000"><span class="ms">Duplicates</span></div>
<div class="a" style="left:4px;top:30px;width:130px;height:14px;line-height:14px;white-space:nowrap;color:#000"><span class="ms">DB2ADMIN.EMP_SALA...</span></div>
<div class="a" style="left:141px;top:30px;width:130px;height:14px;line-height:14px;white-space:nowrap;color:#000"><span class="ms">Regular index</span></div>
<div class="a" style="left:274px;top:30px;width:130px;height:14px;line-height:14px;white-space:nowrap;color:#000"><span class="ms">Duplicates</span></div>
<div class="a" style="left:4px;top:44px;width:130px;height:14px;line-height:14px;white-space:nowrap;color:#000"><span class="ms">DB2ADMIN.IDX_EMP_...</span></div>
<div class="a" style="left:141px;top:44px;width:130px;height:14px;line-height:14px;white-space:nowrap;color:#000"><span class="ms">Regular index</span></div>
<div class="a" style="left:274px;top:44px;width:130px;height:14px;line-height:14px;white-space:nowrap;color:#000"><span class="ms">Duplicates</span></div>
<div class="a" style="left:4px;top:58px;width:130px;height:14px;line-height:14px;white-space:nowrap;color:#000"><span class="ms">DB2ADMIN.IDX_EMP_...</span></div>
<div class="a" style="left:141px;top:58px;width:130px;height:14px;line-height:14px;white-space:nowrap;color:#000"><span class="ms">Regular index</span></div>
<div class="a" style="left:274px;top:58px;width:130px;height:14px;line-height:14px;white-space:nowrap;color:#000"><span class="ms">Duplicates</span></div>
<div class="a" style="left:4px;top:72px;width:130px;height:14px;line-height:14px;white-space:nowrap;color:#000"><span class="ms"><span style="color:#008000">DB2ADMIN.IDX0072014</span></span></div>
<div class="a" style="left:141px;top:72px;width:130px;height:14px;line-height:14px;white-space:nowrap;color:#000"><span class="ms">Virtual</span></div>
<div class="a" style="left:274px;top:72px;width:130px;height:14px;line-height:14px;white-space:nowrap;color:#000"><span class="ms">Unique</span></div>
</div>
<div class="a hdr" style="left:403px;top:226px;width:134px;height:17px;"></div>
<div class="a hdr" style="left:537px;top:226px;width:134px;height:17px;"></div>
<div class="a hdr" style="left:671px;top:226px;width:99px;height:17px;border-right:none;box-shadow:inset 0 -1px 0 #aca899"></div>
<div class="a t" style="left:410px;top:228px;line-height:14px"><span class="ms">Index Name</span></div>
<div class="a t" style="left:544px;top:228px;line-height:14px"><span class="ms">Type</span></div>
<div class="a t" style="left:678px;top:228px;line-height:14px"><span class="ms">Unique Rule</span></div>
<div class="a trh" style="left:403px;top:322px;width:367px;height:17px;"></div>
<div class="a sbb" style="left:403px;top:322px;width:17px;height:17px;"><svg class="a" style="left:4px;top:3px" width="7" height="9"><path d="M5.5 1 L2 4.5 L5.5 8" stroke="#4d6185" stroke-width="2" fill="none"/></svg></div>
<div class="a sbb" style="left:751px;top:322px;width:17px;height:17px;"><svg class="a" style="left:4px;top:3px" width="7" height="9"><path d="M1.5 1 L5 4.5 L1.5 8" stroke="#4d6185" stroke-width="2" fill="none"/></svg></div>
<div class="a sbt" style="left:423px;top:322px;width:30px;height:17px;"><svg class="a" style="left:10px;top:4px" width="9" height="8"><path d="M0.5 0 V6 M2.5 0 V6 M4.5 0 V6 M6.5 0 V6" stroke="#fff"/><path d="M1.5 1 V7 M3.5 1 V7 M5.5 1 V7 M7.5 1 V7" stroke="#8ca8ea"/></svg></div>
<div class="a trv" style="left:771px;top:226px;width:17px;height:96px;"></div>
<div class="a sbb" style="left:771px;top:227px;width:17px;height:17px;"><svg class="a" style="left:3px;top:4px" width="9" height="7"><path d="M1 5.5 L4.5 2 L8 5.5" stroke="#4d6185" stroke-width="2" fill="none"/></svg></div>
<div class="a sbt" style="left:771px;top:246px;width:17px;height:16px;"><svg class="a" style="left:4px;top:4px" width="8" height="8"><path d="M0 1.5 H7 M0 3.5 H7 M0 5.5 H7" stroke="#8aa2e0"/></svg></div>
<div class="a sbb" style="left:771px;top:303px;width:17px;height:17px;"><svg class="a" style="left:3px;top:4px" width="9" height="7"><path d="M1 1.5 L4.5 5 L8 1.5" stroke="#4d6185" stroke-width="2" fill="none"/></svg></div>
<div class="a" style="left:771px;top:322px;width:18px;height:17px;background:#ece9d8"></div>
<div class="a" style="left:400px;top:344px;width:391px;height:119px;background:#fff;border-top:2px solid #aca899;border-left:2px solid #aca899;border-right:1px solid #fff;border-bottom:1px solid #fff;box-shadow:inset 1px 1px 0 #716f64, inset -1px -1px 0 #f1efe2"></div>
<div class="a" style="left:403px;top:364px;width:367px;height:79px;overflow:hidden">
<div class="a" style="left:0px;top:0px;width:367px;height:1px;background:#fff"></div>
<div class="a" style="left:0px;top:15px;width:367px;height:1px;background:#efede2"></div>
<div class="a" style="left:0px;top:29px;width:367px;height:1px;background:#efede2"></div>
<div class="a" style="left:0px;top:43px;width:367px;height:1px;background:#efede2"></div>
<div class="a" style="left:0px;top:57px;width:367px;height:1px;background:#efede2"></div>
<div class="a" style="left:0px;top:71px;width:367px;height:1px;background:#efede2"></div>
<div class="a" style="left:0px;top:85px;width:367px;height:1px;background:#efede2"></div>
<div class="a" style="left:134px;top:0px;width:1px;height:79px;background:#efede2"></div>
<div class="a" style="left:268px;top:0px;width:1px;height:79px;background:#efede2"></div>
<div class="a" style="left:4px;top:2px;width:130px;height:14px;line-height:14px;white-space:nowrap;color:#000"><span class="ms">EMP_ID</span></div>
<div class="a" style="left:141px;top:2px;width:130px;height:14px;line-height:14px;white-space:nowrap;color:#000"><span class="ms">INTEGER(4)</span></div>
<div class="a" style="left:274px;top:2px;width:130px;height:14px;line-height:14px;white-space:nowrap;color:#000"><span class="ms">No</span></div>
<div class="a" style="left:4px;top:16px;width:130px;height:14px;line-height:14px;white-space:nowrap;color:#000"><span class="ms">EMP_NAME</span></div>
<div class="a" style="left:141px;top:16px;width:130px;height:14px;line-height:14px;white-space:nowrap;color:#000"><span class="ms">VARCHAR(60)</span></div>
<div class="a" style="left:274px;top:16px;width:130px;height:14px;line-height:14px;white-space:nowrap;color:#000"><span class="ms">No</span></div>
<div class="a" style="left:4px;top:30px;width:130px;height:14px;line-height:14px;white-space:nowrap;color:#000"><span class="ms">EMAIL</span></div>
<div class="a" style="left:141px;top:30px;width:130px;height:14px;line-height:14px;white-space:nowrap;color:#000"><span class="ms">VARCHAR(45)</span></div>
<div class="a" style="left:274px;top:30px;width:130px;height:14px;line-height:14px;white-space:nowrap;color:#000"><span class="ms">No</span></div>
<div class="a" style="left:4px;top:44px;width:130px;height:14px;line-height:14px;white-space:nowrap;color:#000"><span class="ms">HIRE_DATE</span></div>
<div class="a" style="left:141px;top:44px;width:130px;height:14px;line-height:14px;white-space:nowrap;color:#000"><span class="ms">TIMESTAMP(10)</span></div>
<div class="a" style="left:274px;top:44px;width:130px;height:14px;line-height:14px;white-space:nowrap;color:#000"><span class="ms">No</span></div>
<div class="a" style="left:4px;top:58px;width:130px;height:14px;line-height:14px;white-space:nowrap;color:#000"><span class="ms">JOB_ID</span></div>
<div class="a" style="left:141px;top:58px;width:130px;height:14px;line-height:14px;white-space:nowrap;color:#000"><span class="ms">VARCHAR(10)</span></div>
<div class="a" style="left:274px;top:58px;width:130px;height:14px;line-height:14px;white-space:nowrap;color:#000"><span class="ms">No</span></div>
<div class="a" style="left:4px;top:72px;width:130px;height:14px;line-height:14px;white-space:nowrap;color:#000"><span class="ms">EMP_ADDRESS</span></div>
<div class="a" style="left:141px;top:72px;width:130px;height:14px;line-height:14px;white-space:nowrap;color:#000"><span class="ms">VARCHAR(40)</span></div>
<div class="a" style="left:274px;top:72px;width:130px;height:14px;line-height:14px;white-space:nowrap;color:#000"><span class="ms">No</span></div>
</div>
<div class="a hdr" style="left:403px;top:347px;width:134px;height:17px;"></div>
<div class="a hdr" style="left:537px;top:347px;width:134px;height:17px;"></div>
<div class="a hdr" style="left:671px;top:347px;width:99px;height:17px;border-right:none;box-shadow:inset 0 -1px 0 #aca899"></div>
<div class="a t" style="left:410px;top:349px;line-height:14px"><span class="ms">Column Name</span></div>
<div class="a t" style="left:544px;top:349px;line-height:14px"><span class="ms">Data Type</span></div>
<div class="a t" style="left:678px;top:349px;line-height:14px"><span class="ms">User Type</span></div>
<div class="a trh" style="left:403px;top:443px;width:367px;height:17px;"></div>
<div class="a sbb" style="left:403px;top:443px;width:17px;height:17px;"><svg class="a" style="left:4px;top:3px" width="7" height="9"><path d="M5.5 1 L2 4.5 L5.5 8" stroke="#4d6185" stroke-width="2" fill="none"/></svg></div>
<div class="a sbb" style="left:751px;top:443px;width:17px;height:17px;"><svg class="a" style="left:4px;top:3px" width="7" height="9"><path d="M1.5 1 L5 4.5 L1.5 8" stroke="#4d6185" stroke-width="2" fill="none"/></svg></div>
<div class="a sbt" style="left:423px;top:443px;width:62px;height:17px;"><svg class="a" style="left:26px;top:4px" width="9" height="8"><path d="M0.5 0 V6 M2.5 0 V6 M4.5 0 V6 M6.5 0 V6" stroke="#fff"/><path d="M1.5 1 V7 M3.5 1 V7 M5.5 1 V7 M7.5 1 V7" stroke="#8ca8ea"/></svg></div>
<div class="a trv" style="left:771px;top:347px;width:17px;height:96px;"></div>
<div class="a sbb" style="left:771px;top:348px;width:17px;height:17px;"><svg class="a" style="left:3px;top:4px" width="9" height="7"><path d="M1 5.5 L4.5 2 L8 5.5" stroke="#4d6185" stroke-width="2" fill="none"/></svg></div>
<div class="a sbt" style="left:771px;top:367px;width:17px;height:10px;"></div>
<div class="a sbb" style="left:771px;top:424px;width:17px;height:17px;"><svg class="a" style="left:3px;top:4px" width="9" height="7"><path d="M1 1.5 L4.5 5 L8 1.5" stroke="#4d6185" stroke-width="2" fill="none"/></svg></div>
<div class="a" style="left:771px;top:443px;width:18px;height:17px;background:#ece9d8"></div>
<div class="a" style="left:400px;top:465px;width:391px;height:159px;background:#fff;border-top:2px solid #aca899;border-left:2px solid #aca899;border-right:1px solid #fff;border-bottom:1px solid #fff;box-shadow:inset 1px 1px 0 #716f64, inset -1px -1px 0 #f1efe2"></div>
<div class="a" style="left:403px;top:485px;width:386px;height:119px;overflow:hidden">
<div class="a" style="left:0px;top:0px;width:386px;height:1px;background:#fff"></div>
<div class="a" style="left:0px;top:15px;width:386px;height:1px;background:#efede2"></div>
<div class="a" style="left:0px;top:29px;width:386px;height:1px;background:#efede2"></div>
<div class="a" style="left:0px;top:43px;width:386px;height:1px;background:#efede2"></div>
<div class="a" style="left:0px;top:57px;width:386px;height:1px;background:#efede2"></div>
<div class="a" style="left:0px;top:71px;width:386px;height:1px;background:#efede2"></div>
<div class="a" style="left:0px;top:85px;width:386px;height:1px;background:#efede2"></div>
<div class="a" style="left:0px;top:99px;width:386px;height:1px;background:#efede2"></div>
<div class="a" style="left:0px;top:113px;width:386px;height:1px;background:#efede2"></div>
<div class="a" style="left:0px;top:127px;width:386px;height:1px;background:#efede2"></div>
<div class="a" style="left:134px;top:0px;width:1px;height:119px;background:#efede2"></div>
<div class="a" style="left:268px;top:0px;width:1px;height:119px;background:#efede2"></div>
</div>
<div class="a hdr" style="left:403px;top:468px;width:134px;height:17px;"></div>
<div class="a hdr" style="left:537px;top:468px;width:134px;height:17px;"></div>
<div class="a hdr" style="left:671px;top:468px;width:118px;height:17px;border-right:none;box-shadow:inset 0 -1px 0 #aca899"></div>
<div class="a t" style="left:410px;top:470px;line-height:14px"><span class="ms">Sequence</span></div>
<div class="a t" style="left:544px;top:470px;line-height:14px"><span class="ms">ValCount</span></div>
<div class="a t" style="left:678px;top:470px;line-height:14px"><span class="ms">DistCount</span></div>
<div class="a trh" style="left:403px;top:604px;width:386px;height:17px;"></div>
<div class="a sbb" style="left:403px;top:604px;width:17px;height:17px;"><svg class="a" style="left:4px;top:3px" width="7" height="9"><path d="M5.5 1 L2 4.5 L5.5 8" stroke="#4d6185" stroke-width="2" fill="none"/></svg></div>
<div class="a sbb" style="left:771px;top:604px;width:17px;height:17px;"><svg class="a" style="left:4px;top:3px" width="7" height="9"><path d="M1.5 1 L5 4.5 L1.5 8" stroke="#4d6185" stroke-width="2" fill="none"/></svg></div>
<div class="a sbt" style="left:423px;top:604px;width:198px;height:17px;"><svg class="a" style="left:94px;top:4px" width="9" height="8"><path d="M0.5 0 V6 M2.5 0 V6 M4.5 0 V6 M6.5 0 V6" stroke="#fff"/><path d="M1.5 1 V7 M3.5 1 V7 M5.5 1 V7 M7.5 1 V7" stroke="#8ca8ea"/></svg></div>
<div class="a" style="left:4px;top:631px;width:199px;height:19px;border-top:1px solid #aca899;border-left:1px solid #aca899;border-right:1px solid #fff;border-bottom:1px solid #fff"></div>
<div class="a" style="left:206px;top:631px;width:35px;height:19px;border-top:1px solid #aca899;border-left:1px solid #aca899;border-right:1px solid #fff;border-bottom:1px solid #fff"></div>
<div class="a t" style="left:206px;top:636px;width:35px;text-align:center;color:#aca899;font-size:11px">Num</div>
<div class="a" style="left:244px;top:631px;width:47px;height:19px;border-top:1px solid #aca899;border-left:1px solid #aca899;border-right:1px solid #fff;border-bottom:1px solid #fff"></div>
<div class="a t" style="left:244px;top:636px;width:47px;text-align:center;color:#000;font-size:11px">Insert</div>
<div class="a" style="left:294px;top:631px;width:34px;height:19px;border-top:1px solid #aca899;border-left:1px solid #aca899;border-right:1px solid #fff;border-bottom:1px solid #fff"></div>
<div class="a t" style="left:294px;top:636px;width:34px;text-align:center;color:#aca899;font-size:11px">Caps</div>
<div class="a" style="left:332px;top:631px;width:35px;height:19px;border-top:1px solid #aca899;border-left:1px solid #aca899;border-right:1px solid #fff;border-bottom:1px solid #fff"></div>
<div class="a t" style="left:332px;top:636px;width:35px;text-align:center;color:#aca899;font-size:11px">Scroll</div>
<div class="a" style="left:370px;top:631px;width:48px;height:19px;border-top:1px solid #aca899;border-left:1px solid #aca899;border-right:1px solid #fff;border-bottom:1px solid #fff"></div>
<div class="a t" style="left:370px;top:636px;width:48px;text-align:center;color:#000;font-size:11px">Modified</div>
<div class="a" style="left:421px;top:631px;width:46px;height:19px;border-top:1px solid #aca899;border-left:1px solid #aca899;border-right:1px solid #fff;border-bottom:1px solid #fff"></div>
<div class="a t" style="left:421px;top:636px;width:46px;text-align:center;color:#000;font-size:11px">1 : 1</div>
<div class="a" style="left:470px;top:631px;width:63px;height:19px;border-top:1px solid #aca899;border-left:1px solid #aca899;border-right:1px solid #fff;border-bottom:1px solid #fff"></div>
<div class="a t" style="left:470px;top:636px;width:63px;text-align:center;color:#000;font-size:11px">441 bytes</div>
</body></html>
